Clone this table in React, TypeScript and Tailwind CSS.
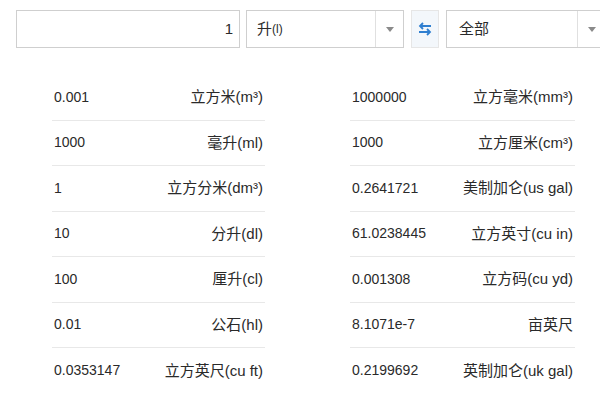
import React from 'react';

const left: [string, React.ReactNode][] = [
  ['0.001', <>立方米(m³)</>],
  ['1000', <>毫升(ml)</>],
  ['1', <>立方分米(dm³)</>],
  ['10', <>分升(dl)</>],
  ['100', <>厘升(cl)</>],
  ['0.01', <>公石(hl)</>],
  ['0.0353147', <>立方英尺(cu ft)</>],
];

const right: [string, React.ReactNode][] = [
  ['1000000', <>立方毫米(mm³)</>],
  ['1000', <>立方厘米(cm³)</>],
  ['0.2641721', <>美制加仑(us gal)</>],
  ['61.0238445', <>立方英寸(cu in)</>],
  ['0.001308', <>立方码(cu yd)</>],
  ['8.1071e-7', <>亩英尺</>],
  ['0.2199692', <>英制加仑(uk gal)</>],
];

const Caret = () => (
  <svg width="8" height="5" viewBox="0 0 8 5">
    <path d="M0 0h8L4 5z" fill="#8a8a8a" />
  </svg>
);

const Column = ({ rows, width }: { rows: [string, React.ReactNode][]; width: string }) => (
  <div className={`flex flex-col ${width}`}>
    {rows.map(([v, u], i) => (
      <div
        key={i}
        className={`flex h-[45.5px] items-center justify-between px-[2px] ${i < rows.length - 1 ? 'border-b border-[#e8e8e8]' : ''}`}
      >
        <span>{v}</span>
        <span className="text-[15px]">{u}</span>
      </div>
    ))}
  </div>
);

export default function App() {
  return (
    <div
      className="h-[395px] w-[600px] overflow-hidden bg-white text-[14px] text-[#2a2a2a]"
      style={{ fontFamily: '"Liberation Sans", "Noto Sans CJK SC", sans-serif' }}
    >
      <div className="flex items-center pl-4 pt-[10px]">
        <div className="flex h-[38px] w-[224px] shrink-0 items-center justify-end border border-[#cfcfcf] pr-[6px] text-[15px]">
          1
        </div>
        <div className="ml-[6px] flex h-[38px] w-[158px] shrink-0 border border-[#cfcfcf]">
          <div className="flex flex-1 items-center pl-[10px] text-[15px]">
            升<span className="text-[12px]">(l)</span>
          </div>
          <div className="flex w-[28px] items-center justify-center border-l border-[#e0e0e0]">
            <Caret />
          </div>
        </div>
        <div className="ml-[7px] flex h-[38px] w-[28px] shrink-0 items-center justify-center border border-[#e6e6e6] bg-[#f3f7fb]">
          <svg width="14" height="18" viewBox="0 0 14 18" fill="none" stroke="#2f7fd0" strokeWidth="1.8">
            <path d="M13 6H2M5 3L2 6l3 3" />
            <path d="M1 12h11M9 9l3 3-3 3" />
          </svg>
        </div>
        <div className="ml-[7px] flex h-[38px] w-[160px] shrink-0 border border-[#cfcfcf]">
          <div className="flex flex-1 items-center pl-[12px] text-[15px]">全部</div>
          <div className="flex w-[28px] items-center justify-center border-l border-[#e0e0e0]">
            <Caret />
          </div>
        </div>
      </div>
      <div className="mt-[27px] flex pl-[52px]">
        <Column rows={left} width="w-[213px]" />
        <div className="w-[85px]" />
        <Column rows={right} width="w-[225px]" />
      </div>
    </div>
  );
}
